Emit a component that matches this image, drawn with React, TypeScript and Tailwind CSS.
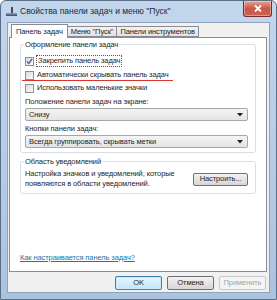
import React from "react";

const font = { fontFamily: '"Liberation Sans", Arial, sans-serif' };

function Check({ checked }: { checked?: boolean }) {
  return (
    <span className="flex h-[9px] w-[9px] shrink-0 items-center justify-center border border-[#8f8f8f] bg-gradient-to-br from-[#dcdcdc] to-[#fbfbfb]">
      {checked && (
        <svg width="7" height="7" viewBox="0 0 7 7">
          <path d="M1 3.5 L2.8 5.5 L6 1" fill="none" stroke="#4a5f97" strokeWidth="1.3" />
        </svg>
      )}
    </span>
  );
}

function Combo({ value }: { value: string }) {
  return (
    <div className="flex h-[13px] items-center justify-between rounded-[2px] border border-[#a7a7a7] bg-gradient-to-b from-[#f4f4f4] to-[#e4e4e4] pl-[3px] pr-[4px]">
      <span>{value}</span>
      <svg width="6" height="4" viewBox="0 0 6 4">
        <path d="M0 0 H6 L3 3.5 Z" fill="#222" />
      </svg>
    </div>
  );
}

function Btn({ children, primary, disabled }: { children: React.ReactNode; primary?: boolean; disabled?: boolean }) {
  return (
    <div
      className={`flex h-[14px] w-[47px] items-center justify-center rounded-[2px] border bg-gradient-to-b ${
        primary
          ? "border-[#3c7fb1] from-[#eaf6fd] to-[#bee6fd] shadow-[inset_0_0_0_1px_#c6ecfd]"
          : disabled
          ? "border-[#c7c7c7] from-[#f4f4f4] to-[#f4f4f4] text-[#a5a5a5]"
          : "border-[#707070] from-[#f2f2f2] to-[#d6d6d6]"
      }`}
    >
      {children}
    </div>
  );
}

export default function App() {
  return (
    <div style={font} className="relative flex h-[300px] w-[277px] flex-col overflow-hidden rounded-t-[6px] border border-[#5a6e86] bg-gradient-to-b from-[#c2d6ec] via-[#b7cde6] to-[#aac3df] text-[7.5px] tracking-[-0.1px] text-[#1e1e1e]">
      <div className="flex h-[21px] shrink-0 items-start">
        <div className="mt-[5px] ml-[5px] flex h-[10px] w-[11px] flex-col justify-end">
          <div className="mx-auto h-[6px] w-[2px] bg-[#4a4a4a]" />
          <div className="h-[3px] w-[11px] bg-gradient-to-b from-[#8fa6c0] to-[#2d4a6d]" />
        </div>
        <span className="mt-[4px] ml-[3px] text-[8.5px] tracking-normal text-[#1c2a3a]">Свойства панели задач и меню "Пуск"</span>
        <div className="ml-auto mr-[4px] flex h-[16px] w-[29px] items-center justify-center rounded-b-[3px] border border-t-0 border-[#7a2a2a] bg-gradient-to-b from-[#e8a493] via-[#c9574a] to-[#d0634c] shadow-[inset_0_0_0_1px_rgba(255,255,255,0.35)]">
          <svg width="8" height="7" viewBox="0 0 8 7">
            <path d="M1 0.5 L7 6.5 M7 0.5 L1 6.5" stroke="#fff" strokeWidth="1.8" />
          </svg>
        </div>
      </div>

      <div className="mx-[6px] mb-[6px] flex flex-1 flex-col border border-[#8ea3bb] bg-[#f0f0f0]">
        <div className="mt-[1px] flex h-[13px] items-end pl-[3px]">
          <div className="relative z-10 -mb-px flex h-[14px] items-center border border-b-0 border-[#898c95] bg-white px-[4px]">
            Панель задач
          </div>
          <div className="flex h-[11px] items-center border border-l-0 border-[#898c95] bg-gradient-to-b from-[#f2f2f2] to-[#e3e3e3] px-[3px]">
            Меню "Пуск"
          </div>
          <div className="flex h-[11px] items-center border border-l-0 border-[#898c95] bg-gradient-to-b from-[#f2f2f2] to-[#e3e3e3] px-[3px]">
            Панели инструментов
          </div>
        </div>

        <div className="ml-[1px] mr-[2px] flex h-[235px] flex-col border border-[#898c95] bg-white px-[10px]">
          <div className="mt-[6px] flex flex-col rounded-[3px] border border-[#d5dfe5] px-[4px] pb-[4px]">
            <span className="-mt-[5px] -ml-[1px] self-start bg-white px-[1px] leading-[10px]">Оформление панели задач</span>
            <div className="mt-[5px] flex items-center gap-[2px] leading-[10px]">
              <Check checked />
              <span className="border border-dotted border-[#555] px-[1px]">Закрепить панель задач</span>
            </div>
            <div className="relative mt-[3px] flex items-center gap-[3px] leading-[10px]">
              <Check />
              <span>Автоматически скрывать панель задач</span>
              <div className="absolute -left-[3px] top-[10px] h-[1px] w-[151px] bg-[#d8352e]" />
            </div>
            <div className="mt-[3px] flex items-center gap-[3px] leading-[10px]">
              <Check />
              <span>Использовать маленькие значки</span>
            </div>
            <span className="mt-[4px] leading-[10px]">Положение панели задач на экране:</span>
            <div className="mt-[1px] mr-[3px]">
              <Combo value="Снизу" />
            </div>
            <span className="mt-[3px] leading-[10px]">Кнопки панели задач:</span>
            <div className="mt-[1px] mr-[3px]">
              <Combo value="Всегда группировать, скрывать метки" />
            </div>
          </div>

          <div className="mt-[8px] flex flex-col rounded-[3px] border border-[#d5dfe5] px-[4px] pb-[4px]">
            <span className="-mt-[5px] -ml-[1px] self-start bg-white px-[1px] leading-[10px]">Область уведомлений</span>
            <div className="mt-[2px] flex items-center justify-between pr-[3px]">
              <div className="flex flex-col leading-[10px]">
                <span>Настройка значков и уведомлений, которые</span>
                <span>появляются в области уведомлений.</span>
              </div>
              <div className="flex h-[13px] w-[55px] items-center justify-center rounded-[2px] border border-[#707070] bg-gradient-to-b from-[#f2f2f2] to-[#d6d6d6]">
                Настроить...
              </div>
            </div>
          </div>

          <span className="mt-auto mb-[8px] underline text-[#1a74a8]">Как настраивается панель задач?</span>
        </div>

        <div className="mt-[4px] flex justify-end gap-[5px] pr-[3px]">
          <Btn primary>OK</Btn>
          <Btn>Отмена</Btn>
          <Btn disabled>Применить</Btn>
        </div>
      </div>
    </div>
  );
}
